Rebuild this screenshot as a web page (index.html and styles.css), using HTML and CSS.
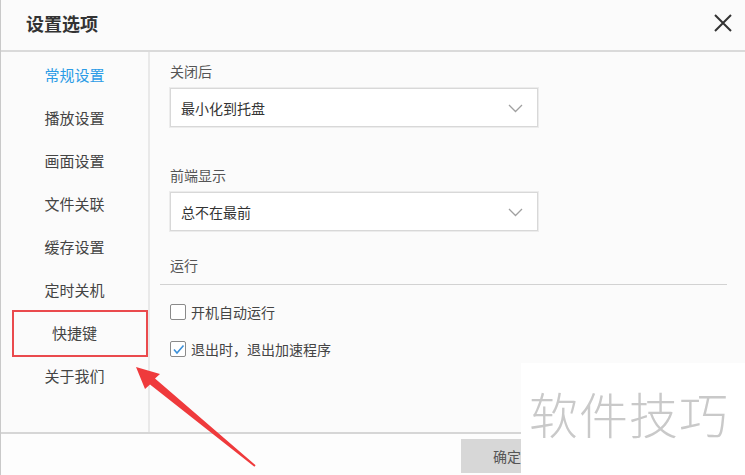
FILE: index.html
```html
<!DOCTYPE html>
<html>
	<head>
		<meta charset="utf-8" />
		<title>设置选项</title>
		<link rel="stylesheet" href="styles.css">
	</head>
	<body>
		<div class="dialog">
			<div class="header">
				<span class="title">设置选项</span>
				<svg class="close" width="18" height="18" viewBox="0 0 18 18">
					<path d="M1 1 L17 17 M17 1 L1 17" stroke="#333" stroke-width="2" fill="none" />
				</svg>
			</div>

			<div class="main">
				<div class="sidebar">
					<div class="nav-item active">常规设置</div>
					<div class="nav-item">播放设置</div>
					<div class="nav-item">画面设置</div>
					<div class="nav-item">文件关联</div>
					<div class="nav-item">缓存设置</div>
					<div class="nav-item">定时关机</div>
					<div class="nav-item">快捷键</div>
					<div class="nav-item">关于我们</div>
					<div class="mark-box"></div>
				</div>

				<div class="content">
					<div class="field-label">关闭后</div>
					<div class="select">
						<span>最小化到托盘</span>
						<svg class="chevron" width="15" height="9" viewBox="0 0 15 9">
							<polyline points="1,1 7.5,7.5 14,1" stroke="#a0a0a0" stroke-width="1.3" fill="none" />
						</svg>
					</div>

					<div class="field-label second">前端显示</div>
					<div class="select">
						<span>总不在最前</span>
						<svg class="chevron" width="15" height="9" viewBox="0 0 15 9">
							<polyline points="1,1 7.5,7.5 14,1" stroke="#a0a0a0" stroke-width="1.3" fill="none" />
						</svg>
					</div>

					<div class="section-title">运行</div>

					<div class="check-row">
						<span class="checkbox"></span>
						<span>开机自动运行</span>
					</div>
					<div class="check-row">
						<span class="checkbox">
							<svg width="13" height="13" viewBox="0 0 13 13">
								<polyline points="2,6.5 5,10 11.5,2.5" stroke="#3b8fd8" stroke-width="1.6" fill="none" />
							</svg>
						</span>
						<span>退出时，退出加速程序</span>
					</div>
				</div>
			</div>

			<div class="footer">
				<button class="btn-ok">确定</button>
			</div>
		</div>

		<svg class="arrow" width="745" height="475" viewBox="0 0 745 475">
			<polygon points="136,367 160,374 155,378.5 255.6,465.2 254.4,466.8 150,384.6 145,389" fill="#ef3a3c" />
		</svg>

		<div class="watermark">软件技巧</div>
	</body>
</html>
```

FILE: styles.css
```css
* {
  box-sizing: border-box;
}

body {
  margin: 0;
  width: 745px;
  height: 475px;
  overflow: hidden;
  position: relative;
  background: #fbfbfb;
  font-family: "Noto Sans CJK SC", "Microsoft YaHei", sans-serif;
  color: #444;
}

.dialog {
  display: flex;
  flex-direction: column;
  height: 475px;
  border-left: 1px solid #c9c9c9;
}

.header {
  height: 52px;
  flex-shrink: 0;
  display: flex;
  align-items: center;
  justify-content: space-between;
  padding: 0 13px 4px 25px;
  border-bottom: 2px solid #dadada;
}

.title {
  font-size: 18px;
  font-weight: bold;
  color: #333;
}

.main {
  display: flex;
  height: 380px;
  flex-shrink: 0;
}

.sidebar {
  position: relative;
  width: 149px;
  padding-top: 1px;
  border-right: 2px solid #e9e9e9;
}

.nav-item {
  height: 43px;
  line-height: 43px;
  text-align: center;
  font-size: 15px;
  color: #444;
}

.nav-item.active {
  color: #2b9ce6;
}

/* red annotation box around the shortcut item */
.mark-box {
  position: absolute;
  left: 11px;
  top: 258px;
  width: 136px;
  height: 47px;
  border: 2px solid #ea4a4d;
}

.content {
  flex: 1;
  padding: 9px 18px 0 20px;
}

.field-label {
  font-size: 14px;
  line-height: 20px;
  color: #555;
  margin-bottom: 7px;
}

.field-label.second {
  margin-top: 38px;
}

.select {
  position: relative;
  width: 368px;
  height: 39px;
  display: flex;
  align-items: center;
  padding-left: 10px;
  background: #fff;
  border: 1px solid #d8d8d8;
  box-shadow: 0 0 0 1px #ececec;
  font-size: 14px;
  color: #333;
}

.chevron {
  position: absolute;
  right: 14px;
  top: 15px;
}

.section-title {
  margin: 24px 0 0 -10px;
  padding: 0 0 9px 10px;
  font-size: 14px;
  line-height: 20px;
  color: #555;
  border-bottom: 1px solid #d2d2d2;
}

.check-row {
  display: flex;
  align-items: center;
  height: 20px;
  margin-top: 17px;
  font-size: 14px;
  color: #444;
}

.checkbox {
  width: 16px;
  height: 16px;
  margin-right: 5px;
  border: 1px solid #8a8a8a;
  border-radius: 2px;
  background: #fff;
  display: flex;
  align-items: center;
  justify-content: center;
}

.footer {
  flex: 1;
  border-top: 2px solid #d6d6d6;
  background: #fdfdfd;
  padding: 5px 0 0 460px;
}

.btn-ok {
  width: 92px;
  height: 34px;
  border: 0;
  background: #d7d7d7;
  font-family: inherit;
  font-size: 14px;
  color: #555;
  padding: 0;
}

.arrow {
  position: absolute;
  left: 0;
  top: 0;
  pointer-events: none;
}

.watermark {
  position: absolute;
  left: 521px;
  top: 363px;
  width: 224px;
  height: 112px;
  background: #fff;
  padding: 14px 0 0 8px;
  font-size: 49px;
  font-weight: 300;
  line-height: 72px;
  color: #c9c9c9;
  letter-spacing: 1px;
}
```
